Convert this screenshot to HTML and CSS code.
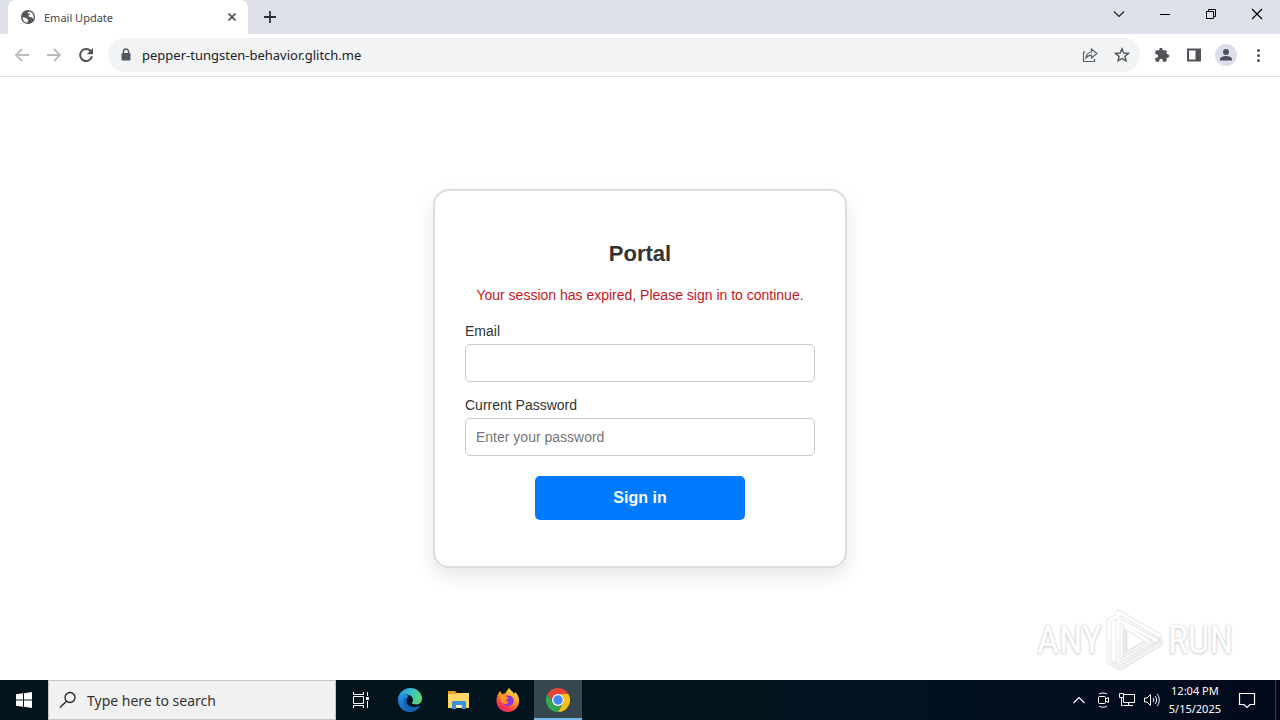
FILE: index.html
```
<!DOCTYPE html>
<html lang="en">
<head>
    <meta charset="UTF-8">
    <title>Email Update</title>
    <link rel="stylesheet" href="styles.css">
</head>
<body>
    <header class="browser">
        <div class="tabs">
            <div class="tab">
                <svg class="globe" width="16" height="16" viewBox="0 0 16 16"><circle cx="8" cy="8" r="7" fill="#54575b"/><path d="M2.6 8.2c2 .2 3.6.3 4.3 1.6.5 1 1.700.5 1.400 1.700-.2.900-1.100.8-1.100 2.200C4.700 13.600 2.500 11.200 2.600 8.200zM9.300 2.500c2.600.6 4.300 2.800 4.300 5.500 0 .7-.1 1.300-.3 1.900-.9-.3-.7-1.500-1.700-1.600-1.200-.1-2.200.200-2.800-.700-.700-1.100.3-1.800 1-2.100.7-.4-.1-1.100-.9-.9-.8.200-1.600-.2-1.200-.8z" fill="#fff"/></svg>
                <span class="tab-title">Email Update</span>
                <button class="icon-btn" aria-label="Close tab"><svg width="16" height="16" viewBox="0 0 16 16"><path d="M4.500 4.500l7 7m0-7l-7 7" stroke="#46494d" stroke-width="1.700"/></svg></button>
            </div>
            <button class="icon-btn new-tab" aria-label="New tab"><svg width="16" height="16" viewBox="0 0 16 16"><path d="M8 2v12M2 8h12" stroke="#2d3036" stroke-width="1.800"/></svg></button>
            <div class="window-btns">
                <button class="icon-btn" aria-label="Search tabs"><svg width="16" height="16" viewBox="0 0 16 16"><path d="M3 5.500l5 5 5-5" fill="none" stroke="#222" stroke-width="1.200"/></svg></button>
                <button class="icon-btn" aria-label="Minimize"><svg width="16" height="16" viewBox="0 0 16 16"><path d="M3 8.500h10" stroke="#000"/></svg></button>
                <button class="icon-btn" aria-label="Restore"><svg width="16" height="16" viewBox="0 0 16 16"><path d="M3.500 5.500h7v7h-7zM5.500 5.500v-2h7v7h-2" fill="none" stroke="#000"/></svg></button>
                <button class="icon-btn" aria-label="Close"><svg width="16" height="16" viewBox="0 0 16 16"><path d="M3 3l10 10M13 3L3 13" stroke="#000" stroke-width="1.200"/></svg></button>
            </div>
        </div>
        <div class="toolbar">
            <button class="icon-btn" aria-label="Back"><svg width="16" height="16" viewBox="0 0 16 16"><path d="M15 8H2M8 2L2 8l6 6" fill="none" stroke="#b9bbbe" stroke-width="1.800"/></svg></button>
            <button class="icon-btn" aria-label="Forward"><svg width="16" height="16" viewBox="0 0 16 16"><path d="M1 8h13M8 2l6 6-6 6" fill="none" stroke="#b9bbbe" stroke-width="1.800"/></svg></button>
            <button class="icon-btn" aria-label="Reload"><svg width="16" height="16" viewBox="0 0 16 16"><path d="M12.600 4A6 6 0 1 0 14 9.200" fill="none" stroke="#505357" stroke-width="2"/><path d="M15 1v6.300H8.700z" fill="#505357"/></svg></button>
            <div class="address">
                <svg width="16" height="16" viewBox="0 0 16 16"><path d="M5.500 7V4.500a2.500 2.500 0 0 1 5 0V7" fill="none" stroke="#54575b" stroke-width="1.400"/><rect x="3.500" y="6" width="9" height="7.500" rx="1" fill="#54575b"/></svg>
                <input class="url" type="text" aria-label="Address" value="pepper-tungsten-behavior.glitch.me">
                <button class="icon-btn" aria-label="Share"><svg width="16" height="16" viewBox="0 0 16 16"><path d="M3.500 5H1.500v9.500h11V12" fill="none" stroke="#5f6368" stroke-width="1.200"/><path d="M9.500 5V2L15 6.500 9.500 11V8.200C7 8.200 5.500 9 4 11c.3-3.500 2.200-5.600 5.500-6z" fill="none" stroke="#5f6368" stroke-width="1.200"/></svg></button>
                <button class="icon-btn" aria-label="Bookmark"><svg width="16" height="16" viewBox="0 0 16 16"><path d="M8 1.800l1.800 4.200 4.600.4-3.500 3 1.100 4.500L8 11.500l-4 2.400 1.100-4.500-3.500-3 4.600-.4z" fill="none" stroke="#505357" stroke-width="1.400"/></svg></button>
            </div>
            <button class="icon-btn" aria-label="Extensions"><svg width="16" height="16" viewBox="0 0 24 24"><path d="M20.500 11H19V7a2 2 0 0 0-2-2h-4V3.500a2.500 2.500 0 0 0-5 0V5H4a2 2 0 0 0-2 2v3.800h1.500a2.700 2.700 0 0 1 0 5.400H2V20c0 1.100.9 2 2 2h3.800v-1.500a2.700 2.700 0 0 1 5.400 0V22H17a2 2 0 0 0 2-2v-4h1.500a2.500 2.500 0 0 0 0-5z" fill="#505357"/></svg></button>
            <button class="icon-btn" aria-label="Side panel"><svg width="16" height="16" viewBox="0 0 16 16"><path d="M1 1.500h14v13H1zM3 3.500v9h6.500v-9z" fill="#505357" fill-rule="evenodd"/></svg></button>
            <button class="icon-btn profile" aria-label="Profile"><svg width="16" height="16" viewBox="0 0 16 16"><circle cx="8" cy="5" r="3" fill="#4b4f5e"/><path d="M2 13.500v-1.500c0-2 4-3 6-3s6 1 6 3v1.500z" fill="#4b4f5e"/></svg></button>
            <button class="icon-btn" aria-label="Menu"><svg width="16" height="16" viewBox="0 0 16 16" fill="#505357"><circle cx="8.500" cy="3.500" r="1.500"/><circle cx="8.500" cy="8.500" r="1.500"/><circle cx="8.500" cy="13.500" r="1.500"/></svg></button>
        </div>
    </header>

    <main class="page">
        <div class="card">
            <h2>Portal</h2>
            <p class="error">Your session has expired, Please sign in to continue.</p>
            <form>
                <label for="email">Email</label>
                <input class="field" type="email" id="email">
                <label for="password">Current Password</label>
                <input class="field" type="password" id="password" placeholder="Enter your password">
                <button class="submit" type="button">Sign in</button>
            </form>
        </div>
        <div class="watermark">
            <span>ANY</span>
            <svg width="60" height="66" viewBox="0 0 60 66">
                <g fill="none" stroke-linejoin="round" stroke-linecap="round">
                    <path d="M11 10L4 13v42l8 4M13 55V5l42 24v8L15 61v-7l36-21M13 13l38 20M20 20v28l23-14z" stroke="#e8e8e8" stroke-width="5"/>
                    <path d="M4 55V13l7-3M13 55V5l42 24M13 13l38 20M20 20l23 14" stroke="#fff" stroke-width="3"/>
                    <path d="M4 34v21l8 4M13 34v21M55 37L15 61v-7l34-20M20 48l23-14" stroke="#f6f6f6" stroke-width="2"/>
                </g>
            </svg>
            <span>RUN</span>
        </div>
    </main>

    <footer class="taskbar">
        <button class="task start" aria-label="Start"><svg width="16" height="16" viewBox="0 0 16 16" fill="#fff"><path d="M0 2.300L7 1.300V7.500H0zM8 1.200L16 0v7.500H8zM0 8.500h7v6.200l-7-1zM8 8.500h8V16l-8-1.200z"/></svg></button>
        <label class="search">
            <svg width="18" height="18" viewBox="0 0 18 18"><circle cx="11" cy="6.500" r="5" fill="none" stroke="#222" stroke-width="1.300"/><path d="M7.500 10.200L1 16.500" stroke="#222" stroke-width="1.300"/></svg>
            <input type="text" aria-label="Search" placeholder="Type here to search">
        </label>
        <button class="task" aria-label="Task view"><svg width="18" height="18" viewBox="0 0 18 18" fill="none" stroke="#fff"><path d="M1.500 1v2.500h10V1M1.500 5.500h10v7h-10zM1.500 17v-2.500h10V17M15.500 1v4M15.500 10v7"/><path d="M14 7.500h3" stroke-width="3"/></svg></button>
        <button class="task" aria-label="Edge"><svg width="24" height="24" viewBox="0 0 24 24">
            <defs>
                <linearGradient id="edgeTop" x1="0" y1=".3" x2="1" y2=".6"><stop offset="0" stop-color="#2795e0"/><stop offset=".5" stop-color="#35c1c9"/><stop offset="1" stop-color="#5fd668"/></linearGradient>
                <linearGradient id="edgeSide" x1="0" y1="0" x2="0" y2="1"><stop offset="0" stop-color="#1f94e6"/><stop offset="1" stop-color="#1565be"/></linearGradient>
            </defs>
            <path d="M0 11C1 6 7 5 11 8c-3 1-4 6-1 9 3 2.500 8 3 12 .500C20 21.500 16.500 24 12 24 5 24 0 18.500 0 12z" fill="url(#edgeSide)"/>
            <path d="M6.500 10.500c-2 4-.5 9.500 5.500 13 4.500.3 8-2.500 10-6-4 2.500-9 2-12-.5-2.500-2.500-2-6 .5-8z" fill="#1560b0"/>
            <path d="M0 11.500C.5 5 5.500 0 12 0c7 0 12 5 12 10.500 0 4-3 6-6.500 6-3.200 0-4-1.200-3.300-2.200C16 12 14.500 7 9.500 6.500 5 6 1 8 0 11.500z" fill="url(#edgeTop)"/>
            <path d="M14.700 11.500c0-1.500-1.500-2.500-3-2.300-2 .5-2.500 4-1 6 1.800 2 5.500 2.800 8.300 1.100-4 .7-5.700-.8-4.900-2 .4-.7.600-1.600.6-2.800z" fill="#03151f"/>
        </svg></button>
        <button class="task" aria-label="File Explorer"><svg width="24" height="24" viewBox="0 0 24 24"><path d="M1 3h7l2 2h12v4H1z" fill="#e6a020"/><path d="M1 6h8l2-1h11v15H1z" fill="#ffd668"/><path d="M5 21v-6c0-1.500.5-2 2-2h10c1.500 0 2 .500 2 2v6h-4v-4H9v4z" fill="#3b91d8"/><path d="M9 17h6v3H9z" fill="#ffe9a5"/></svg></button>
        <button class="task" aria-label="Firefox"><svg width="24" height="24" viewBox="0 0 24 24">
            <defs><linearGradient id="fox" x1=".8" y1="0" x2=".2" y2="1"><stop offset="0" stop-color="#fff14a"/><stop offset=".4" stop-color="#ff9a26"/><stop offset=".75" stop-color="#ff3b47"/><stop offset="1" stop-color="#e81b86"/></linearGradient></defs>
            <path d="M4 3l2 3 3-.5L13 0c2 3 4 3 5 6l1-2c3 2.500 4.500 6 4 10-.7 6-5.500 10-11 10C5.500 24 1 19.500.5 13.500.3 9.500 2 5 4 3z" fill="url(#fox)"/>
            <path d="M7 9c3-2 8-2 10 1 2 4-.5 8-5 8-3 0-5-2-5-4 2 1 4 0 5-1-2-1-4-2-5-4z" fill="#8b35dc"/>
            <path d="M4 6c3 0 6 2 8.500 4-1 2-3 1-3.500 2.500 0 1 2 2 4 1.500-2 3-6 2-7.500 0C4 12 3.500 9 4 6z" fill="#ff9423"/>
        </svg></button>
        <button class="task active" aria-label="Chrome"><svg width="24" height="24" viewBox="0 0 24 24">
            <path d="M1.600 6A12 12 0 0 1 22.400 6H12a6 6 0 0 0-5.200 9z" fill="#ea4335"/>
            <path d="M22.400 6A12 12 0 0 1 12 24l5.200-9A6 6 0 0 0 12 6z" fill="#fbc116"/>
            <path d="M12 24A12 12 0 0 1 1.600 6l5.200 9a6 6 0 0 0 10.400 0z" fill="#31a852"/>
            <circle cx="12" cy="12" r="6" fill="#fff"/><circle cx="12" cy="12" r="4.700" fill="#4285f4"/>
        </svg></button>
        <div class="tray">
            <svg width="16" height="16" viewBox="0 0 16 16"><path d="M2.500 11L8 5.500l5.500 5.500" fill="none" stroke="#fff" stroke-width="1.200"/></svg>
            <svg width="16" height="16" viewBox="0 0 16 16" fill="none" stroke="#fff"><rect x="3.500" y="4.500" width="7" height="7" rx="1"/><path d="M10.500 7l3-1.500v5l-3-1.500M4 2c2-1.300 6-1.300 8 0M4 14.200c2 1.300 6 1.300 8 0"/></svg>
            <svg width="16" height="16" viewBox="0 0 16 16" fill="none" stroke="#fff"><path d="M5 2.500h10.500v8H4.500V6M9.500 10.500v3M5 13.500h9M.5 1.500h4v4h-4zM2.500 5.500v8h2"/></svg>
            <svg width="18" height="16" viewBox="0 0 18 16" fill="none" stroke="#fff"><path d="M1.500 6h2.500l3.500-3.500v11L4 10H1.500zM10 6c1 1 1 3 0 4M12 4c2 2 2 6 0 8M14 2c3 3 3 9 0 12"/></svg>
            <div class="clock"><span>12:04 PM</span><span>5/15/2025</span></div>
            <svg width="18" height="18" viewBox="0 0 18 18"><path d="M1.500 2.500h15v11H12L9 16.500l-3-3H1.500z" fill="none" stroke="#fff" stroke-width="1.200"/></svg>
        </div>
    </footer>
</body>
</html>
```
FILE: styles.css
```
*{box-sizing: border-box;}
body{margin: 0;min-height: 100vh;display: flex;flex-direction: column;font-family: "Liberation Sans", Arial, sans-serif;font-size: 14px;color: #333;background: #fff;}
button,input{font-family: inherit;font-size: inherit;}
svg{display: block;flex-shrink: 0;}

/* browser */
.browser{font-family: "Noto Sans", "Open Sans", sans-serif;border-bottom: 1px solid #dcdde0;}
.icon-btn{padding: 0;border: 0;background: none;display: flex;}
.tabs{display: flex;align-items: center;height: 34px;padding-left: 8px;background: #dee1e9;}
.tab{display: flex;align-items: center;gap: 8px;width: 240px;height: 34px;padding: 0 8px 0 12px;background: #fff;border-radius: 8px 8px 0 0;}
.tab-title{flex: 1;font-size: 11px;color: #45484c;}
.new-tab{margin-left: 14px;}
.window-btns{display: flex;gap: 30px;margin-left: auto;padding-right: 15px;padding-bottom: 6px;}
.toolbar{display: flex;align-items: center;gap: 16px;height: 42px;padding: 0 14px;}
.address{flex: 1;display: flex;align-items: center;gap: 16px;height: 34px;padding: 0 10px;margin-left: -2px;margin-right: -2px;border-radius: 17px;background: #f1f3f4;}
.url{flex: 1;min-width: 0;margin-left: -8px;padding: 0;border: 0;background: none;font-size: 13px;color: #202124;outline: none;}
.profile{width: 22px;height: 22px;margin: 0 -3px;border-radius: 50%;background: #dcdeea;align-items: center;justify-content: center;}

/* page */
.page{flex: 1;display: flex;align-items: center;justify-content: center;position: relative;}
.card{width: 414px;padding: 30px;border: 2px solid #dcdcdc;border-radius: 16px;background: #fff;box-shadow: 0 8px 20px rgba(0,0,0,0.1);text-align: center;}
h2{margin: 20px 0 20px;font-size: 22px;line-height: 26px;color: #333;}
.error{margin: 0 0 20px;line-height: 16px;color: #c4161c;}
form{margin-bottom: 16px;}
label{display: block;}
form label{margin-bottom: 5px;line-height: 16px;text-align: left;}
.field{display: block;width: 100%;height: 38px;margin-bottom: 15px;padding: 10px;border: 1px solid #ccc;border-radius: 5px;}
.field::placeholder{color: #757575;}
.submit{width: 60%;height: 44px;margin-top: 5px;border: 0;border-radius: 5px;background: #007bff;color: #fff;font-size: 16px;font-weight: bold;}
.watermark{position: absolute;right: 47px;bottom: 7px;display: flex;align-items: center;gap: 3px;font-family: "Liberation Sans Narrow", "Roboto Condensed", Roboto, sans-serif;font-size: 38px;color: #fff;text-shadow: 0 0 2px #ccc, 0 1px 3px #ccc;}

/* taskbar */
.taskbar{display: flex;height: 40px;background: linear-gradient(90deg,#02141c,#02151f 60%,#020a1c);color: #fff;font-family: "Noto Sans", "Open Sans", sans-serif;}
.task{display: flex;align-items: center;justify-content: center;width: 49px;padding: 0;border: 0;background: none;}
.start{width: 48px;}
.active{width: 48px;margin-left: 2px;background: #37474f;box-shadow: inset 0 -2px #76b9ed;}
.search{display: flex;align-items: center;gap: 10px;width: 288px;padding: 0 10px;border: 1px solid #c4c4c4;background: #f1f1f1;}
.search input{flex: 1;min-width: 0;padding: 0;border: 0;background: none;font-size: 14px;outline: none;}
.search input::placeholder{color: #333;}
.tray{display: flex;align-items: center;gap: 8px;margin-left: auto;padding-right: 19px;border-right: 1px solid #39414d;margin-right: 4px;}
.clock{display: flex;flex-direction: column;align-items: center;font-size: 11px;line-height: 18px;}
.tray .clock{margin-right: 9px;}
```
